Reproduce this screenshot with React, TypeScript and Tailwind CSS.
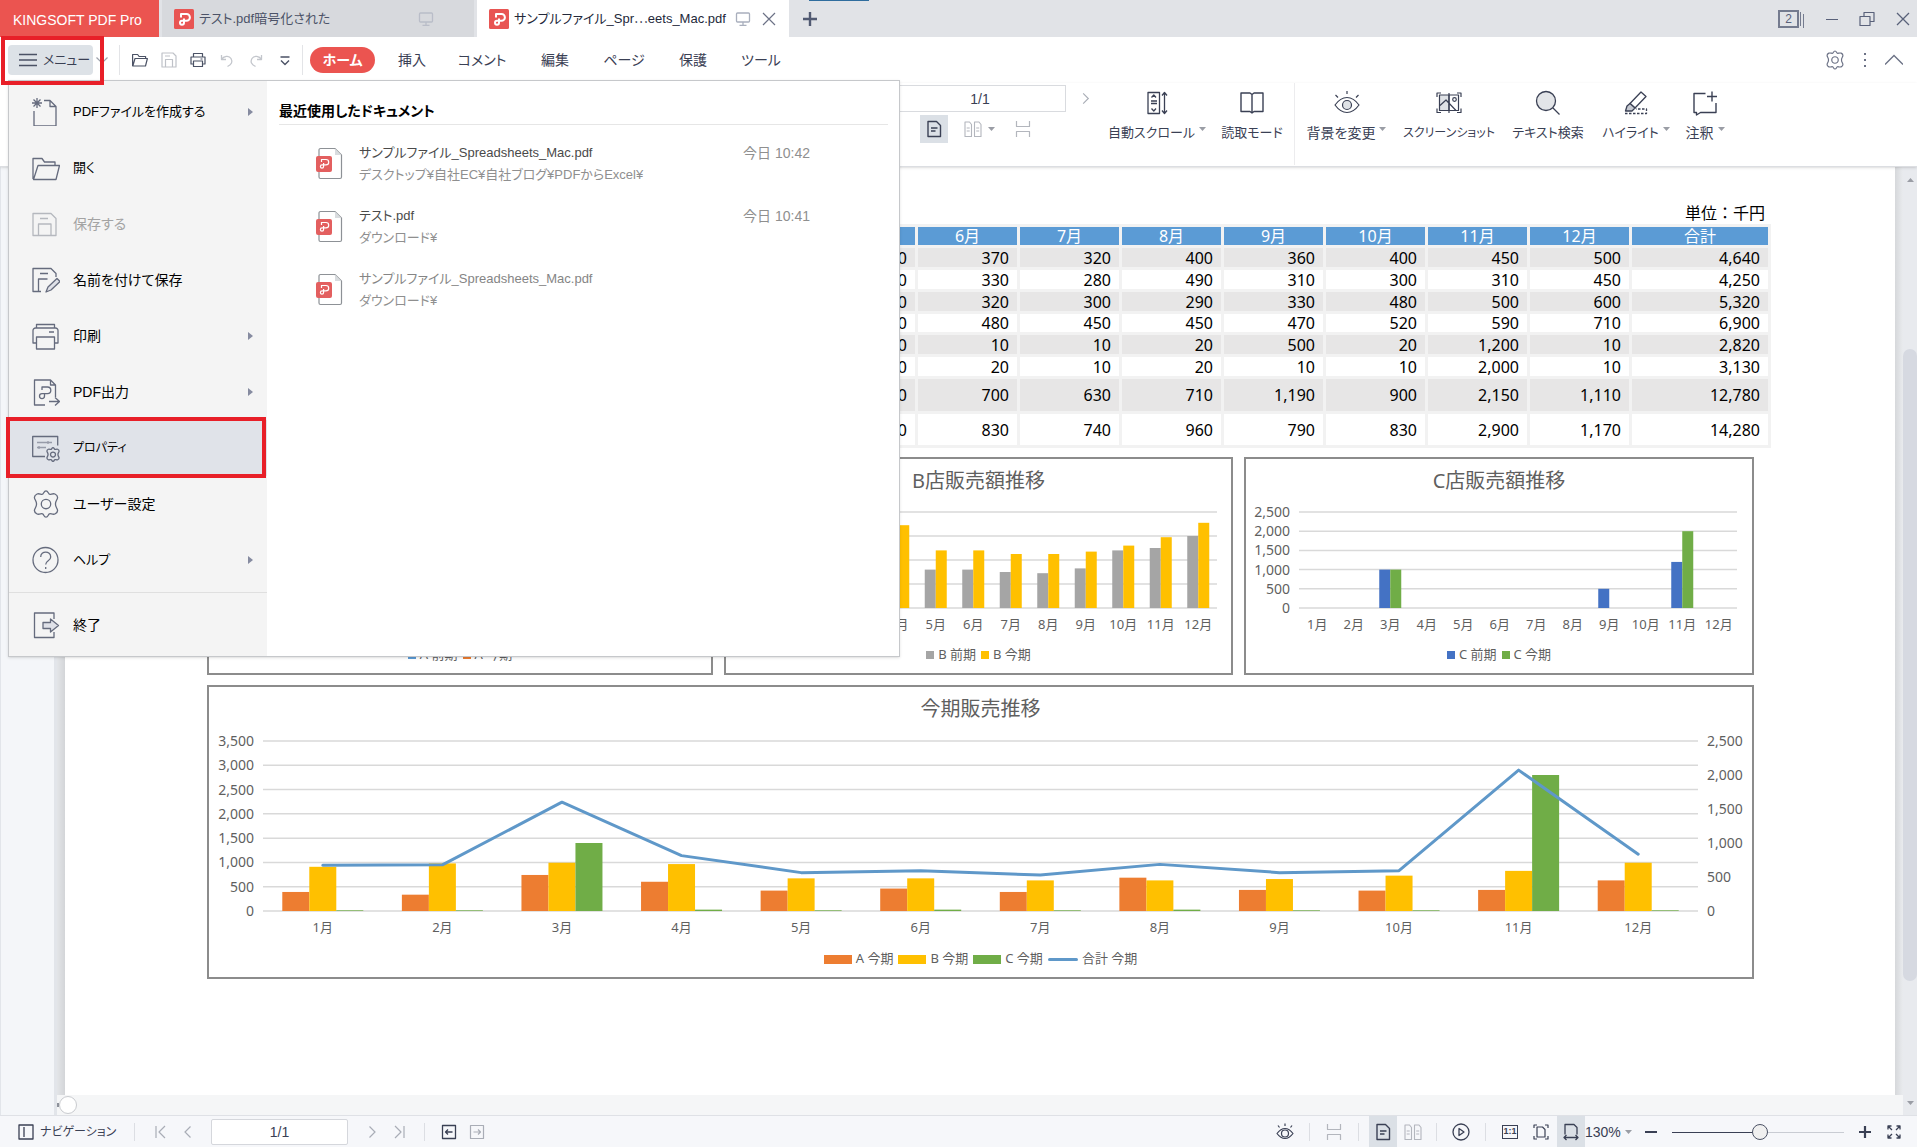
import type { ReactNode } from "react";
import { clsx } from "clsx";

const UI_FONT = "font-['Liberation_Sans','Noto_Sans_CJK_JP',sans-serif] [font-feature-settings:'palt']";
const DOC_FONT = "font-['Noto_Sans','Noto_Sans_CJK_JP',sans-serif] [font-feature-settings:normal]";

const months = ["1月", "2月", "3月", "4月", "5月", "6月", "7月", "8月", "9月", "10月", "11月", "12月"];

const sales = [
    { name: "A 前期", values: [300, 270, 520, 420, 330, 370, 320, 400, 360, 400, 450, 500] },
    { name: "A 今期", values: [280, 240, 530, 430, 300, 330, 280, 490, 310, 300, 310, 450] },
    { name: "B 前期", values: [490, 500, 620, 570, 320, 320, 300, 290, 330, 480, 500, 600] },
    { name: "B 今期", values: [650, 700, 710, 690, 480, 480, 450, 450, 470, 520, 590, 710] },
    { name: "C 前期", values: [10, 10, 1000, 20, 10, 10, 10, 20, 500, 20, 1200, 10] },
    { name: "C 今期", values: [10, 10, 1000, 20, 10, 20, 10, 20, 10, 10, 2000, 10] },
    { name: "合計 前期", values: [800, 780, 2140, 1010, 660, 700, 630, 710, 1190, 900, 2150, 1110] },
    { name: "合計 今期", values: [940, 950, 2240, 1140, 790, 830, 740, 960, 790, 830, 2900, 1170] },
];

const rowHeights = ["h-[19px]", "h-[19px]", "h-[19px]", "h-[18px]", "h-[19px]", "h-[19px]", "h-8", "h-[31px]"];

const sum = (values: number[]) => values.reduce((a, b) => a + b, 0);
const format = (value: number) => value.toLocaleString("en-US");

/* ---------- icons ---------- */

type IconProps = { size?: number; className?: string; children?: ReactNode; sw?: number };

function Icon({ size = 24, className, children, sw = 1 }: IconProps) {
    return (
        <svg
            width={size}
            height={size}
            viewBox={`0 0 ${size} ${size}`}
            fill="none"
            stroke="currentColor"
            strokeWidth={sw}
            strokeLinejoin="round"
            className={clsx("shrink-0", className)}
            aria-hidden="true"
        >
            {children}
        </svg>
    );
}

function PdfLogo() {
    return (
        <Icon size={20} sw={2} className="text-white">
            <rect width="20" height="20" rx="1.5" fill="#e85553" stroke="none" />
            <path d="M7 8.5V5h5.5a3.4 3.4 0 0 1 0 6.8H8a2 2 0 1 0 2 2V9.5" />
        </Icon>
    );
}

function PdfFile() {
    return (
        <svg width="28" height="34" viewBox="0 0 28 34" fill="none" className="shrink-0" aria-hidden="true">
            <path d="M5 1.5h14l6.5 6.5v22a1.5 1.5 0 0 1-1.5 1.5H4.5a1.5 1.5 0 0 1-1.5-1.5V3a1.5 1.5 0 0 1 1.5-1.5Z" fill="#fff" stroke="#8d9196" strokeWidth="1.2" />
            <path d="M19 1.5v6.5h6.5Z" fill="#d9dcdf" />
            <rect x="0" y="9" width="16" height="16" rx="2" fill="#e35f5f" />
            <path d="M5.5 15v-2.500h4.500a2.700 2.700 0 0 1 0 5.400H6a1.600 1.600 0 1 0 1.600 1.600V16" stroke="#fff" strokeWidth="1.2" />
        </svg>
    );
}

function MonitorIcon({ className }: { className?: string }) {
    return (
        <Icon size={16} className={className} sw={1.3}>
            <rect x="1.5" y="2" width="13" height="9" rx="1" />
            <path d="M8 11v3M4.5 14.3h7" />
        </Icon>
    );
}

const chevrons = {
    left: "M10.5 2.5 5 8l5.5 5.5",
    right: "M5.5 2.5 11 8l-5.5 5.5",
    up: "M0 12l8-8 8 8",
    down: "M2.5 5.5 8 11l5.5-5.5",
};

function Chevron({ dir, size = 16, className }: { dir: keyof typeof chevrons; size?: number; className?: string }) {
    return (
        <svg width={size} height={size} viewBox="0 0 16 16" fill="none" stroke="currentColor" strokeWidth="1.2" className={clsx("shrink-0", className)} aria-hidden="true">
            <path d={chevrons[dir]} />
        </svg>
    );
}

const Caret = ({ className }: { className?: string }) => (
    <svg width="7" height="4" viewBox="0 0 7 4" className={clsx("shrink-0 fill-[#9a9da5]", className)} aria-hidden="true">
        <path d="M0 0h7L3.5 4Z" />
    </svg>
);

const PageIcon = () => (
    <Icon size={18} sw={1.4}>
        <path d="M3 1.5h8.500L15.500 5.500v11H3Z" />
        <path d="M6 8h6.500M6 11h4.500" />
    </Icon>
);

const TwoPageIcon = () => (
    <Icon size={18} sw={1.1}>
        <path d="M1 2h4.500L7.500 4.500v12H1Z M10.500 2H15l2 2.500v12h-6.500Z" />
        <path d="M2.700 8h3M2.700 11h3M12.200 8h3M12.200 11h3" />
    </Icon>
);

const SplitIcon = () => (
    <Icon size={16} sw={1.2}>
        <path d="M1.5 0v5.500h13V0M1.500 16v-5.500h13V16" />
    </Icon>
);

const GearPath = ({ cx, cy, s }: { cx: number; cy: number; s: number }) => (
    <g transform={`translate(${cx} ${cy}) scale(${s})`}>
        <path
            d="M-3 -9.5C-2 -10.5 -1.8 -12.5 0 -12.5S2 -10.5 3 -9.5 6.500 -10.500 8.500 -9.500 11.200 -8 11 -6 9 -3 9 0 10.800 4 11 6 10.500 8.500 8.500 9.500 4 8.500 3 9.500 1.800 12.500 0 12.500 -2 10.500 -3 9.500 -6.500 10.500 -8.500 9.500 -11.200 8 -11 6 -9 3 -9 0 -10.800 -4 -11 -6 -10.500 -8.500 -8.500 -9.500 -4 -8.500 -3 -9.500Z"
            vectorEffect="non-scaling-stroke"
        />
        <circle r="4.5" vectorEffect="non-scaling-stroke" />
    </g>
);

const EyeIcon = () => (
    <Icon size={26} sw={1.2}>
        <path d="M1 15c4-5.500 8-7.500 12-7.500S21 9.500 25 15c-4 5.500-8 7.500-12 7.500S5 20.500 1 15Z" />
        <circle cx="13" cy="15" r="4.5" fill="#dfe2e6" />
        <path d="M13 4V1M4 7.500 1.500 5M22 7.500 24.500 5" />
    </Icon>
);

/* ---------- title bar ---------- */

function TitleBar() {
    return (
        <header className="relative flex h-[37px] shrink-0 items-stretch bg-[#e1e3e7]">
            <h1 className="flex w-[159px] items-center bg-[#eb5450] pt-0.5 pl-[13px] text-sm text-white">KINGSOFT PDF Pro</h1>
            <div className="ml-[3px] flex w-[312px] items-center bg-[#d7d9dd] pl-3 text-[#4c5368]">
                <PdfLogo />
                <span className="ml-[5px] flex-1 text-[13px]">テスト.pdf暗号化された</span>
                <MonitorIcon className="mr-10 text-[#b9bdc8]" />
            </div>
            <div className="ml-[3px] flex w-[312px] items-center bg-white pl-3 text-[#23283a]">
                <PdfLogo />
                <span className="ml-[5px] flex-1 whitespace-nowrap text-[13px]">
                    サンプルファイル_Spr<span className="font-['Noto_Sans_CJK_JP',sans-serif]">…</span>eets_Mac.pdf
                </span>
                <MonitorIcon className="mr-2.5 text-[#a9afbd]" />
                <button aria-label="閉じる" className="mr-3 text-[#6c7286]">
                    <Icon size={16} sw={1.2}>
                        <path d="m2 2 12 12M14 2 2 14" />
                    </Icon>
                </button>
            </div>
            <button aria-label="新しいタブ" className="ml-[13px] text-[#515a72]">
                <Icon size={16} sw={2.4}>
                    <path d="M8 1v14M1 8h14" />
                </Icon>
            </button>
            <div className="absolute top-0 left-[809px] h-px w-[60px] bg-[#2f6d9e]" />
            <div className="ml-auto flex items-center pr-1.5 text-[#59617a]">
                <button aria-label="タブ一覧" className="mr-[21px] flex items-stretch gap-px">
                    <span className="flex h-[18px] w-[21px] items-center justify-center border-2 border-[#747b8f] text-xs">2</span>
                    <span className="my-0.5 w-px bg-[#747b8f]" />
                    <span className="mt-1 ml-px w-px bg-[#747b8f]" />
                </button>
                <button aria-label="最小化" className="mr-5">
                    <Icon size={14}>
                        <path d="M1 7.500h12" />
                    </Icon>
                </button>
                <button aria-label="元に戻す" className="mr-5">
                    <Icon size={16} sw={1.2}>
                        <path d="M1 5.500h10v9H1ZM5 5.500v-4h10v9h-4" />
                    </Icon>
                </button>
                <button aria-label="アプリを閉じる">
                    <Icon size={16} sw={1.3}>
                        <path d="m2 2 12 12M14 2 2 14" />
                    </Icon>
                </button>
            </div>
        </header>
    );
}

/* ---------- menu bar ---------- */

const tabs = [
    { name: "挿入", width: "w-[70px]" },
    { name: "コメント", width: "w-[70px]" },
    { name: "編集", width: "w-[76px]" },
    { name: "ページ", width: "w-[62px]" },
    { name: "保護", width: "w-[76px]" },
    { name: "ツール", width: "w-[60px]" },
];

function MenuBar() {
    return (
        <nav className="flex h-[46px] shrink-0 items-center bg-white pl-2 text-[#3a4054]">
            <div className="relative">
                <button className="flex h-[30px] w-[85px] items-center gap-1.5 rounded-sm bg-[#dde2e7] pl-[11px] text-[13px]">
                    <Icon size={18} sw={1.6} className="text-[#4b5265]">
                        <path d="M0 3.500h18M0 9h18M0 14.500h18" />
                    </Icon>
                    メニュー
                </button>
                <div className="absolute -top-[9px] -left-[7px] z-30 h-[49px] w-[103px] border-4 border-[#e81f28]" />
            </div>
            <Chevron dir="down" className="ml-px text-[#9da1ab]" />
            <div className="ml-[9px] h-[30px] w-px bg-[#e3e4e7]" />
            <div className="flex items-center gap-[13px] pl-3 text-[#4b5265]">
                <button aria-label="開く">
                    <Icon size={16} sw={1.2}>
                        <path d="M.6 14V2.500h5l1.500 2h6.500V6.500M.8 14 3 6.500h12.400L13.500 14Z" />
                    </Icon>
                </button>
                <button aria-label="保存" className="text-[#bfc2c8]">
                    <Icon size={16} sw={1.2}>
                        <path d="M1 1h11l3 3v11H1ZM4.500 15V7.500h7V15M4 4h5" />
                    </Icon>
                </button>
                <button aria-label="印刷">
                    <Icon size={16} sw={1.2}>
                        <path d="M3.500 5V1.500h9V5M3.500 12H1V5h14v7h-2.500M3.500 9h9v5.500h-9ZM10.500 7h2" />
                    </Icon>
                </button>
                <button aria-label="元に戻す操作" className="text-[#c3c6cc]">
                    <Icon size={16} sw={1.3}>
                        <path d="M2.500 3v4.500H7M2.500 7.500C4.500 4 10 3 12 6.500s.5 6-3.500 8" />
                    </Icon>
                </button>
                <button aria-label="やり直し" className="text-[#c3c6cc]">
                    <Icon size={16} sw={1.3}>
                        <path d="M13.500 3v4.500H9M13.500 7.500C11.500 4 6 3 4 6.500s-.5 6 3.500 8" />
                    </Icon>
                </button>
                <button aria-label="カスタマイズ">
                    <Icon size={16} sw={1.4}>
                        <path d="M3.500 5h9M4 8.500l4 4 4-4" />
                    </Icon>
                </button>
            </div>
            <div className="ml-[9px] h-[30px] w-px bg-[#e3e4e7]" />
            <button className="mr-0.5 ml-[7px] h-[26px] w-[65px] rounded-full bg-[#eb5450] text-sm font-bold text-white">ホーム</button>
            {tabs.map((tab) => (
                <button key={tab.name} className={clsx("h-[30px] text-sm whitespace-nowrap", tab.width)}>
                    {tab.name}
                </button>
            ))}
            <div className="mr-3.5 ml-auto flex items-center gap-3 text-[#6c7286]">
                <button aria-label="設定">
                    <Icon size={20} sw={1.2}>
                        <GearPath cx={10} cy={10} s={0.72} />
                    </Icon>
                </button>
                <button aria-label="その他">
                    <Icon size={16} sw={2}>
                        <path d="M8 1v2M8 7v2M8 13v2" />
                    </Icon>
                </button>
                <button aria-label="リボンを折りたたむ">
                    <Chevron dir="up" size={18} />
                </button>
            </div>
        </nav>
    );
}

/* ---------- ribbon ---------- */

const ribbonIcons: Record<string, ReactNode> = {
    scroll: (
        <Icon size={26} sw={1.3}>
            <path d="M4 2.500h11.500v21H4ZM7.500 7.500l2.300-2.500 2.200 2.500M7.500 18.500l2.300 2.500 2.200-2.500M7 11h6M7 13.500h6M20.500 3v20M18 5.500l2.500-3 2.500 3M18 20.500l2.500 3 2.500-3" />
        </Icon>
    ),
    book: (
        <Icon size={26} sw={1.4}>
            <path d="M2 3h9l2 1.500L15 3h9v18.500h-9L13 23l-2-1.500H2ZM13 4.500V23" />
        </Icon>
    ),
    eye: <EyeIcon />,
    shot: (
        <Icon size={26} sw={1.2}>
            <path d="M3.500 5H13v15.500H3.500Z" fill="#dfe2e6" />
            <path d="M13 5h9.500v15.500H13M4 15.500l6-5.500 10 10.500M13 3v20M1 7V3h4M25 7V3h-4M1 18.500v4h4M25 18.500v4h-4" />
            <circle cx="18.500" cy="9.500" r="1.800" />
        </Icon>
    ),
    search: (
        <Icon size={26} sw={1.3}>
            <circle cx="11" cy="11" r="9.500" fill="#e3e5e8" />
            <path d="m18 18 6.500 6.500" />
        </Icon>
    ),
    highlight: (
        <Icon size={26} sw={1.3}>
            <path d="m7 13.500 11-11.500L23 6.500 12 18Z" />
            <path d="M7 13.500 12 18l-3 3H2.500l1.500-5Z" fill="#c6c9d1" />
            <path d="M2 23.500h21.500V19H13" strokeDasharray="2.500 1.500" />
        </Icon>
    ),
    note: (
        <Icon size={26} sw={1.4}>
            <path d="M13.500 3.500H2v19h2.500V25l4-2.500H24V13M20 1.500v10M15 6.500h10" />
        </Icon>
    ),
};

const ribbonButtons = [
    { name: "自動スクロール", icon: "scroll", width: "w-[114px]", text: "text-[13px]", caret: true },
    { name: "読取モード", icon: "book", width: "w-[76px]", text: "text-[13px]" },
    { name: "背景を変更", icon: "eye", width: "w-[104px]", text: "text-sm", caret: true, divider: true },
    { name: "スクリーンショット", icon: "shot", width: "w-[102px]", text: "text-xs" },
    { name: "テキスト検索", icon: "search", width: "w-[96px]", text: "text-[13px]" },
    { name: "ハイライト", icon: "highlight", width: "w-[80px]", text: "text-[13px]", caret: true },
    { name: "注釈", icon: "note", width: "w-[58px]", text: "text-sm", caret: true },
];

function Ribbon() {
    return (
        <div className="relative z-10 flex h-[84px] shrink-0 items-start border-b border-[#dcdee2] bg-white pl-[894px] text-[#3a4054] shadow-sm">
            <div className="w-[206px] shrink-0 pt-0.5">
                <div className="flex items-center">
                    <input
                        aria-label="ページ番号"
                        defaultValue="1/1"
                        className="h-[27px] w-[172px] border border-[#d9dbdf] text-center text-sm outline-none"
                    />
                    <button aria-label="次のページ" className="ml-3 text-[#a9adb6]">
                        <Chevron dir="right" size={15} />
                    </button>
                </div>
                <div className="mt-[3px] flex h-7 items-center pl-[26px] text-[#b3b6bd]">
                    <button aria-label="単一ページ" className="flex h-7 w-7 items-center justify-center bg-[#dbe0e6] text-[#3a4054]">
                        <PageIcon />
                    </button>
                    <button aria-label="見開きページ" className="ml-4 flex items-center gap-1.5">
                        <TwoPageIcon />
                        <Caret />
                    </button>
                    <button aria-label="連続ページ" className="ml-5">
                        <SplitIcon />
                    </button>
                </div>
            </div>
            {ribbonButtons.map((item) => (
                <button
                    key={item.name}
                    className={clsx(
                        "flex h-[82px] shrink-0 flex-col items-center pt-[7px] text-[#3a4054]",
                        item.width,
                        item.divider && "ml-1 border-l border-[#ececee]"
                    )}
                >
                    {ribbonIcons[item.icon]}
                    <span className={clsx("mt-[7px] flex gap-1 leading-5 whitespace-nowrap", item.text)}>
                        {item.name}
                        {item.caret && <Caret className="mt-1" />}
                    </span>
                </button>
            ))}
        </div>
    );
}

/* ---------- main menu ---------- */

const menuIcons: Record<string, ReactNode> = {
    create: (
        <>
            <path d="M2 13v15h22V8.500L18 2.500h-6M18 2.500v6h6" />
            <path d="M5 0v10M0 5h10M1.500 1.500l7 7M8.500 1.500l-7 7" />
        </>
    ),
    open: <path d="M1 25V4.500h9l2.500 3.500h10.500v3.500M1.500 25.500 6 11.500h21.500L24 25.500Z" />,
    save: <path d="M1 3.500h18l5 5v17H1ZM6.500 25.500V14h12.500v11.500M8 8.500h8" />,
    saveAs: (
        <>
            <path d="M9 25.500H1v-23h18l5 5V11M6.500 25.500V13h9M8 7.500h8" />
            <path d="m14 26 2-5L25 12.500l3 3L19 24Z" fill="#dfe1e8" />
        </>
    ),
    print: <path d="M4.500 6V2.500h18V6M4.500 21H1V8.500A2.500 2.500 0 0 1 3.500 6h20A2.500 2.500 0 0 1 26 8.500V21h-3.500M4.500 15h18v12h-18ZM17 10h5" />,
    output: (
        <>
            <path d="M13 27H2.500V2h16l5 5v12M18.500 2v5h5" />
            <path d="M10 12v-3h5.500a3.300 3.300 0 0 1 0 6.600H10a2.500 2.500 0 1 0 2.500 2.500V15M17 23.500h10M23 19.500l4.500 4-4.500 4" />
        </>
    ),
    property: (
        <>
            <path d="M13 22.500H.7V2.500h25v9" />
            <path d="M5 8.500h15M16 7v3M5 13.500h9M7 12v3" opacity=".6" />
            <GearPath cx={21} cy={20.5} s={0.55} />
        </>
    ),
    gear: <GearPath cx={14} cy={14} s={1.05} />,
    help: (
        <>
            <circle cx="13.500" cy="14" r="12.500" />
            <path d="M8.700 11c0-6.500 10-6.500 10 0 0 4-5 3.500-5 7.500M13.700 21v2" />
        </>
    ),
    exit: (
        <>
            <path d="M22 8V2H2.500v24.500H22V21" />
            <path d="M11 11.500h7.500V8l8 6.500-8 6.500v-3.500H11Z" fill="#dfe1e8" />
        </>
    ),
};

type MenuItem = { name: string; icon: string; text?: string; arrow?: boolean; disabled?: boolean; active?: boolean };

const menuItems: MenuItem[] = [
    { name: "PDFファイルを作成する", icon: "create", text: "text-[13px]", arrow: true },
    { name: "開く", icon: "open", text: "text-[13px]" },
    { name: "保存する", icon: "save", disabled: true },
    { name: "名前を付けて保存", icon: "saveAs" },
    { name: "印刷", icon: "print", arrow: true },
    { name: "PDF出力", icon: "output", arrow: true },
    { name: "プロパティ", icon: "property", text: "text-xs", active: true },
    { name: "ユーザー設定", icon: "gear" },
    { name: "ヘルプ", icon: "help", text: "text-[13px]", arrow: true },
];

function MenuRow({ item }: { item: MenuItem }) {
    return (
        <li className="relative">
            <button
                disabled={item.disabled}
                className={clsx(
                    "flex h-14 w-full items-center pr-3.5 pl-[23px]",
                    item.text ?? "text-sm",
                    item.disabled ? "text-[#a3a3a3]" : "text-black",
                    item.active && "bg-[#e0e3e9]"
                )}
            >
                <Icon size={28} sw={1.3} className={item.disabled ? "text-[#b5b8be]" : "text-[#656b7d]"}>
                    {menuIcons[item.icon]}
                </Icon>
                <span className="ml-[13px] flex-1 text-left">{item.name}</span>
                {item.arrow && (
                    <svg width="5" height="8" viewBox="0 0 5 8" className="fill-[#868ba0]" aria-hidden="true">
                        <path d="M0 0v8l5-4Z" />
                    </svg>
                )}
            </button>
            {item.active && <div className="absolute -top-[3px] right-px -bottom-0.5 -left-[3px] border-4 border-[#e81f28]" />}
        </li>
    );
}

const recentFiles = [
    { name: "サンプルファイル_Spreadsheets_Mac.pdf", path: "デスクトップ¥自社EC¥自社ブログ¥PDFからExcel¥", time: "今日 10:42" },
    { name: "テスト.pdf", path: "ダウンロード¥", time: "今日 10:41" },
    { name: "サンプルファイル_Spreadsheets_Mac.pdf", path: "ダウンロード¥", time: "", muted: true },
];

function MainMenu() {
    return (
        <div className="absolute top-20 left-2 z-20 flex w-[892px] border border-[#c6c8cb] bg-white shadow">
            <div className="w-[258px] bg-[#f4f4f4] pt-[3px] pb-[3px]">
                <ul>
                    {menuItems.map((item) => (
                        <MenuRow key={item.name} item={item} />
                    ))}
                </ul>
                <ul className="mt-1 border-t border-[#dfdfdf] pt-1">
                    <MenuRow item={{ name: "終了", icon: "exit" }} />
                </ul>
            </div>
            <section className="flex-1 pt-[19px] pr-[11px] pl-3">
                <h2 className="border-b border-[#e6e6e6] pb-0.5 text-sm leading-[22px] font-bold text-black">最近使用したドキュメント</h2>
                <ul className="pt-[17px]">
                    {recentFiles.map((file, i) => (
                        <li key={i} className="flex h-[63px] items-start pr-[78px] pl-[37px] text-[13px] leading-[22px] text-[#8f8f8f]">
                            <div className="mt-[5px] mr-[15px]">
                                <PdfFile />
                            </div>
                            <div className="flex-1">
                                <a href="#" className={clsx("block", file.muted ? "text-[#858585]" : "text-[#4a4a4a]")}>
                                    {file.name}
                                </a>
                                <p>{file.path}</p>
                            </div>
                            <time className="text-sm leading-[22px]">{file.time}</time>
                        </li>
                    ))}
                </ul>
            </section>
        </div>
    );
}

/* ---------- document ---------- */

function SalesTable() {
    return (
        <table className="w-full table-fixed border-separate border-spacing-[3px] bg-[#f2f2f2] text-right text-base text-black">
            <colgroup>
                <col />
                {months.map((m) => (
                    <col key={m} className="w-[99px]" />
                ))}
                <col className="w-[136px]" />
            </colgroup>
            <thead>
                <tr className="h-[18px] text-center leading-[18px] text-white">
                    {["店舗", ...months, "合計"].map((label) => (
                        <th key={label} scope="col" className="bg-[#5b9bd5] p-0 font-normal">
                            {label}
                        </th>
                    ))}
                </tr>
            </thead>
            <tbody>
                {sales.map((row, i) => (
                    <tr key={row.name} className={clsx("leading-[18px]", i % 2 ? "bg-white" : "bg-[#e7e6e6]", rowHeights[i])}>
                        <th scope="row" className="p-0 px-2 text-left font-normal">
                            {row.name}
                        </th>
                        {row.values.map((value, m) => (
                            <td key={m} className="p-0 px-2">
                                {format(value)}
                            </td>
                        ))}
                        <td className="p-0 px-2">{format(sum(row.values))}</td>
                    </tr>
                ))}
            </tbody>
        </table>
    );
}

type Series = { name: string; color: string; values: number[] };

type ChartProps = {
    title: string;
    series: Series[];
    line?: Series;
    width: number;
    height: number;
    plot: { left: number; right: number; top: number; bottom: number };
    max: number;
    step: number;
    lineAxis?: { max: number; step: number };
    barWidth: number;
};

const ticks = (max: number, step: number) => Array.from({ length: max / step + 1 }, (_, i) => i * step);

function Chart({ title, series, line, width, height, plot, max, step, lineAxis, barWidth }: ChartProps) {
    const plotHeight = plot.bottom - plot.top;
    const pitch = (plot.right - plot.left) / months.length;
    const y = (value: number, top: number) => plot.bottom - (value / top) * plotHeight;
    const center = (i: number) => plot.left + pitch * (i + 0.5);
    // with a line the left axis and the grid belong to it, the bars use the right axis
    const left = lineAxis ?? { max, step };

    return (
        <figure className="border-2 border-[#8c8c8c] bg-white pb-1 text-[13px] text-[#5f5f5f]">
            <figcaption className="flex h-11 items-center justify-center text-xl">{title}</figcaption>
            <svg viewBox={`0 0 ${width} ${height}`} className="block h-auto w-full" role="img" aria-label={title}>
                {ticks(left.max, left.step).map((t) => (
                    <g key={t}>
                        <line x1={plot.left} x2={plot.right} y1={y(t, left.max)} y2={y(t, left.max)} stroke="#d9d9d9" strokeWidth="1.5" />
                        <text x={plot.left - 9} y={y(t, left.max) + 5} textAnchor="end" fontSize="14" fill="currentColor">
                            {format(t)}
                        </text>
                    </g>
                ))}
                {lineAxis &&
                    ticks(max, step).map((t) => (
                        <text key={t} x={plot.right + 9} y={y(t, max) + 5} fontSize="14" fill="currentColor">
                            {format(t)}
                        </text>
                    ))}
                {series.map((s, n) =>
                    s.values.map((value, i) => (
                        <rect
                            key={`${s.name}${i}`}
                            x={center(i) + (n - series.length / 2) * barWidth}
                            y={y(value, max)}
                            width={barWidth}
                            height={plot.bottom - y(value, max)}
                            fill={s.color}
                        />
                    ))
                )}
                {line && (
                    <polyline
                        points={line.values.map((value, i) => `${center(i)},${y(value, left.max)}`).join(" ")}
                        fill="none"
                        stroke={line.color}
                        strokeWidth="3"
                        strokeLinecap="round"
                        strokeLinejoin="round"
                    />
                )}
                {months.map((m, i) => (
                    <text key={m} x={center(i)} y={plot.bottom + 21} textAnchor="middle" fontSize="13" fill="currentColor">
                        {m}
                    </text>
                ))}
            </svg>
            <div className="flex h-7 items-center justify-center gap-[5px]">
                {series.map((s) => (
                    <span key={s.name} className="flex items-center gap-1">
                        <span className={line ? "h-[9px] w-7" : "size-2"} style={{ backgroundColor: s.color }} />
                        {s.name}
                    </span>
                ))}
                {line && (
                    <span className="flex items-center gap-1">
                        <span className="h-[3px] w-[30px] rounded-full" style={{ backgroundColor: line.color }} />
                        {line.name}
                    </span>
                )}
            </div>
        </figure>
    );
}

const colored = (index: number, color: string): Series => ({ ...sales[index], color });
// entries that round to nothing on the store chart are left blank
const large = (s: Series): Series => ({ ...s, values: s.values.map((v) => (v < 100 ? 0 : v)) });

function DocumentPage() {
    return (
        <main className={clsx("min-w-0 flex-1 bg-white pt-9 pr-[124px] pl-[142px]", DOC_FONT)}>
            <p className="pr-1.5 text-right text-base leading-[21px] text-black">単位：千円</p>
            <SalesTable />
            <div className="mt-[9px] mr-[17px] grid grid-cols-[506fr_509fr_510fr] gap-x-[11px] gap-y-2.5">
                <Chart
                    title="A店販売額推移"
                    series={[colored(0, "#5b9bd5"), colored(1, "#ed7d31")]}
                    width={502}
                    height={138}
                    plot={{ left: 41, right: 488, top: 9, bottom: 105 }}
                    max={600}
                    step={200}
                    barWidth={11}
                />
                <Chart
                    title="B店販売額推移"
                    series={[colored(2, "#a5a5a5"), colored(3, "#ffc000")]}
                    width={505}
                    height={138}
                    plot={{ left: 41, right: 491, top: 9, bottom: 105 }}
                    max={800}
                    step={200}
                    barWidth={11}
                />
                <Chart
                    title="C店販売額推移"
                    series={[large(colored(4, "#4472c4")), large(colored(5, "#70ad47"))]}
                    width={506}
                    height={138}
                    plot={{ left: 53, right: 491, top: 9, bottom: 105 }}
                    max={2500}
                    step={500}
                    barWidth={11}
                />
                <div className="col-span-3">
                    <Chart
                        title="今期販売推移"
                        series={[colored(1, "#ed7d31"), colored(3, "#ffc000"), colored(5, "#70ad47")]}
                        line={colored(7, "#5f98c9")}
                        width={1543}
                        height={214}
                        plot={{ left: 54, right: 1489, top: 10, bottom: 180 }}
                        max={2500}
                        step={500}
                        lineAxis={{ max: 3500, step: 500 }}
                        barWidth={27}
                    />
                </div>
            </div>
        </main>
    );
}

function Workspace() {
    return (
        <div className="flex min-h-0 flex-1 overflow-hidden bg-[#f4f6f9]">
            <aside className="w-[57px] shrink-0 border-r-[3px] border-l border-r-[#e2e5ea] border-l-[#e2e5ea]" />
            <div className="flex min-w-0 flex-1 flex-col">
                <div className="flex min-h-0 flex-1 overflow-hidden">
                    <div className="w-2 shrink-0 bg-linear-to-r from-[#e3e5e8] to-[#d3d5d8]" />
                    <DocumentPage />
                    <div className="w-2 shrink-0 bg-linear-to-r from-[#d6d8db] to-[#e9ebee]" />
                </div>
                <div className="flex h-5 shrink-0 items-center bg-[#f5f6f7]">
                    <span className="h-1 w-0.5 bg-[#8d919a]" />
                    <span className="size-[18px] rounded-full border border-[#c9cbcf] bg-white" />
                </div>
            </div>
            <div className="flex w-3.5 shrink-0 flex-col items-center bg-[#e8eaee] pt-[11px] pb-2.5">
                <Caret className="rotate-180" />
                <div className="mt-[167px] mb-[120px] w-full flex-1 rounded-full bg-[#d6d9e1]" />
                <Caret />
            </div>
        </div>
    );
}

/* ---------- status bar ---------- */

const Divider = ({ className }: { className?: string }) => <span className={clsx("h-[18px] w-px shrink-0 bg-[#dcdee3]", className)} />;

function StatusBar() {
    return (
        <footer className="flex h-8 shrink-0 items-center border-t border-[#dfe1e6] bg-[#f6f7fa] pt-px text-[#3a4054]">
            <button className="flex w-[119px] items-center gap-1.5 pl-[18px] text-xs whitespace-nowrap">
                <Icon size={16} sw={1.3}>
                    <path d="M1 1h14v14H1ZM6 3v10" />
                </Icon>
                ナビゲーション
            </button>
            <div className="flex w-[77px] items-center justify-end gap-3 text-[#a9adb6]">
                <Divider className="mr-auto ml-[15px]" />
                <button aria-label="最初のページ">
                    <Icon size={16} sw={1.2}>
                        <path d="M4 2v12M13 2 7 8l6 6" />
                    </Icon>
                </button>
                <button aria-label="前のページ">
                    <Chevron dir="left" />
                </button>
            </div>
            <input
                aria-label="現在のページ"
                defaultValue="1/1"
                className="ml-[15px] h-[26px] w-[137px] rounded-xs border border-[#d5d7dc] bg-white text-center text-sm outline-none"
            />
            <div className="flex items-center pl-4 text-[#a9adb6]">
                <button aria-label="次へ">
                    <Chevron dir="right" />
                </button>
                <button aria-label="最後のページ" className="ml-3">
                    <Icon size={16} sw={1.2}>
                        <path d="M12 2v12M3 2l6 6-6 6" />
                    </Icon>
                </button>
                <Divider className="ml-4" />
                <button aria-label="前の表示" className="ml-4 text-[#3a4054]">
                    <Icon size={16} sw={1.3}>
                        <path d="M1.500 1.500h13v13h-13ZM4.500 8h7M7 5.500 4.500 8 7 10.500" />
                    </Icon>
                </button>
                <button aria-label="次の表示" className="ml-3">
                    <Icon size={16} sw={1.2}>
                        <path d="M1.500 1.500h13v13h-13ZM4.500 8h7M9 5.500 11.500 8 9 10.500" />
                    </Icon>
                </button>
            </div>
            <div className="ml-auto flex items-center">
                <button aria-label="保護モード">
                    <Icon size={18} sw={1.2}>
                        <path d="M1 10.500C4 6.500 6.500 5.500 9 5.500s5 1 8 5c-3 4-5.500 5-8 5s-5-1-8-5ZM9 3V.5M3.500 4.500 2 2.500M14.500 4.500 16 2.500" />
                        <circle cx="9" cy="10.500" r="3.500" />
                    </Icon>
                </button>
                <Divider className="ml-[15px]" />
                <button aria-label="連続表示" className="ml-4 text-[#b3b6bd]">
                    <SplitIcon />
                </button>
                <Divider className="ml-4" />
                <button aria-label="単一ページ表示" className="ml-2.5 flex h-8 w-7 items-center justify-center bg-[#dbe0e6]">
                    <PageIcon />
                </button>
                <button aria-label="見開き表示" className="ml-[7px] text-[#b3b6bd]">
                    <TwoPageIcon />
                </button>
                <Divider className="ml-3.5" />
                <button aria-label="スライドショー" className="ml-[15px]">
                    <Icon size={18} sw={1.3}>
                        <circle cx="9" cy="9" r="8" />
                        <path d="M7 5.500v7L12 9Z" />
                    </Icon>
                </button>
                <Divider className="ml-[15px]" />
                <button aria-label="実際のサイズ" className="ml-4 flex h-3.5 w-4 items-center justify-center border border-[#3a4054] text-[9px] font-bold">
                    1:1
                </button>
                <button aria-label="全体表示" className="ml-[15px]">
                    <Icon size={16} sw={1.2}>
                        <path d="M1 4V1h3M15 4V1h-3M1 12v3h3M15 12v3h-3M4 3h5.500L12 5.500V13H4Z" />
                    </Icon>
                </button>
                <button aria-label="幅に合わせる" className="ml-2 flex h-8 w-7 items-center justify-center bg-[#dbe0e6]">
                    <Icon size={18} sw={1.3}>
                        <path d="M3 11.500V1.500h9L15 4.500v7M2 14.500h14M4.500 12 2 14.500 4.500 17M13.500 12l2.500 2.500-2.500 2.500" />
                    </Icon>
                </button>
                <button className="flex w-[42px] items-center gap-1 text-sm">
                    130% <Caret />
                </button>
                <button aria-label="縮小" className="ml-[17px]">
                    <Icon size={14} sw={2}>
                        <path d="M1 7h12" />
                    </Icon>
                </button>
                <input
                    type="range"
                    aria-label="ズーム"
                    min={0}
                    max={100}
                    defaultValue={51}
                    className="ml-3.5 h-4 w-[172px] appearance-none bg-transparent [&::-webkit-slider-runnable-track]:h-px [&::-webkit-slider-runnable-track]:bg-linear-to-r [&::-webkit-slider-runnable-track]:from-[#3a4054] [&::-webkit-slider-runnable-track]:from-50% [&::-webkit-slider-runnable-track]:to-[#c9ccd3] [&::-webkit-slider-runnable-track]:to-50% [&::-webkit-slider-thumb]:-mt-2 [&::-webkit-slider-thumb]:size-4 [&::-webkit-slider-thumb]:appearance-none [&::-webkit-slider-thumb]:rounded-full [&::-webkit-slider-thumb]:border [&::-webkit-slider-thumb]:border-[#4b5265] [&::-webkit-slider-thumb]:bg-[#f0f0f0]"
                />
                <button aria-label="拡大" className="ml-3.5">
                    <Icon size={14} sw={2.2}>
                        <path d="M1 7h12M7 1v12" />
                    </Icon>
                </button>
                <button aria-label="全画面" className="mr-4 ml-[15px]">
                    <Icon size={14} sw={1.3}>
                        <path d="M1 4.500V1h3.500M1 1l4 4M9.500 1H13v3.500M13 1 9 5M1 9.500V13h3.500M1 13l4-4M13 9.500V13H9.500M13 13 9 9" />
                    </Icon>
                </button>
            </div>
        </footer>
    );
}

export default function App() {
    return (
        <div className={clsx("relative flex h-screen flex-col overflow-hidden bg-white", UI_FONT)}>
            <TitleBar />
            <MenuBar />
            <Ribbon />
            <Workspace />
            <StatusBar />
            <MainMenu />
        </div>
    );
}
